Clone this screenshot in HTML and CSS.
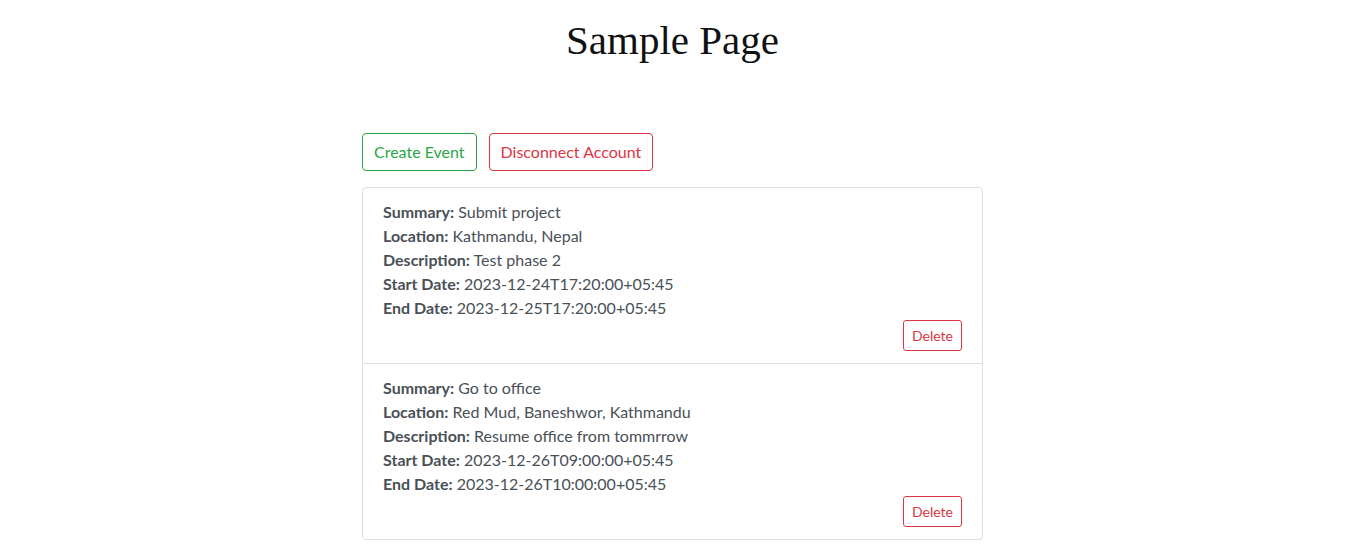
FILE: index.html
```html
<!DOCTYPE html>
<html lang="en">
<head>
<meta charset="utf-8">
<title>Sample Page</title>
<link rel="stylesheet" href="styles.css">
</head>
<body>
<h1 class="page-title">Sample Page</h1>
<main class="wrap">
  <div class="actions">
    <button class="btn btn-green">Create Event</button>
    <button class="btn btn-red">Disconnect Account</button>
  </div>
  <ul class="events">
    <li class="event">
      <div><b>Summary:</b> Submit project</div>
      <div><b>Location:</b> Kathmandu, Nepal</div>
      <div><b>Description:</b> Test phase 2</div>
      <div><b>Start Date:</b> 2023-12-24T17:20:00+05:45</div>
      <div><b>End Date:</b> 2023-12-25T17:20:00+05:45</div>
      <div class="row-end"><button class="btn btn-red btn-sm">Delete</button></div>
    </li>
    <li class="event">
      <div><b>Summary:</b> Go to office</div>
      <div><b>Location:</b> Red Mud, Baneshwor, Kathmandu</div>
      <div><b>Description:</b> Resume office from tommrrow</div>
      <div><b>Start Date:</b> 2023-12-26T09:00:00+05:45</div>
      <div><b>End Date:</b> 2023-12-26T10:00:00+05:45</div>
      <div class="row-end"><button class="btn btn-red btn-sm">Delete</button></div>
    </li>
  </ul>
</main>
</body>
</html>
```
FILE: styles.css
```css
* { box-sizing: border-box; }
body {
  margin: 0;
  font-family: Lato, "Noto Sans", sans-serif;
  font-size: 16px;
  line-height: 1.5;
  color: #212529;
  background: #fff;
}
.page-title {
  margin: 0;
  padding-top: 14px;
  text-align: center;
  font-family: "Liberation Serif", serif;
  font-weight: 400;
  font-size: 41px;
  line-height: 52px;
  color: #111;
}
.wrap {
  width: 621px;
  margin: 67px auto 0;
}
.actions {
  display: flex;
  gap: 12px;
  margin-bottom: 16px;
}
.btn {
  font-family: inherit;
  font-size: 16px;
  line-height: 24px;
  padding: 6px 11px;
  background: #fff;
  border: 1px solid;
  border-radius: 4px;
  cursor: pointer;
}
.btn-green { color: #28a745; border-color: #28a745; }
.btn-red { color: #dc3545; border-color: #dc3545; }
.btn-sm {
  font-size: 14px;
  line-height: 21px;
  padding: 4px 8px;
  border-radius: 3px;
}
.events {
  list-style: none;
  margin: 0;
  padding: 0;
  border: 1px solid #dfdfdf;
  border-radius: 4px;
}
.event {
  padding: 12px 20px;
  color: #495057;
}
.event + .event { border-top: 1px solid #dfdfdf; }
.event b { font-weight: 700; }
.row-end {
  display: flex;
  justify-content: flex-end;
}
```
